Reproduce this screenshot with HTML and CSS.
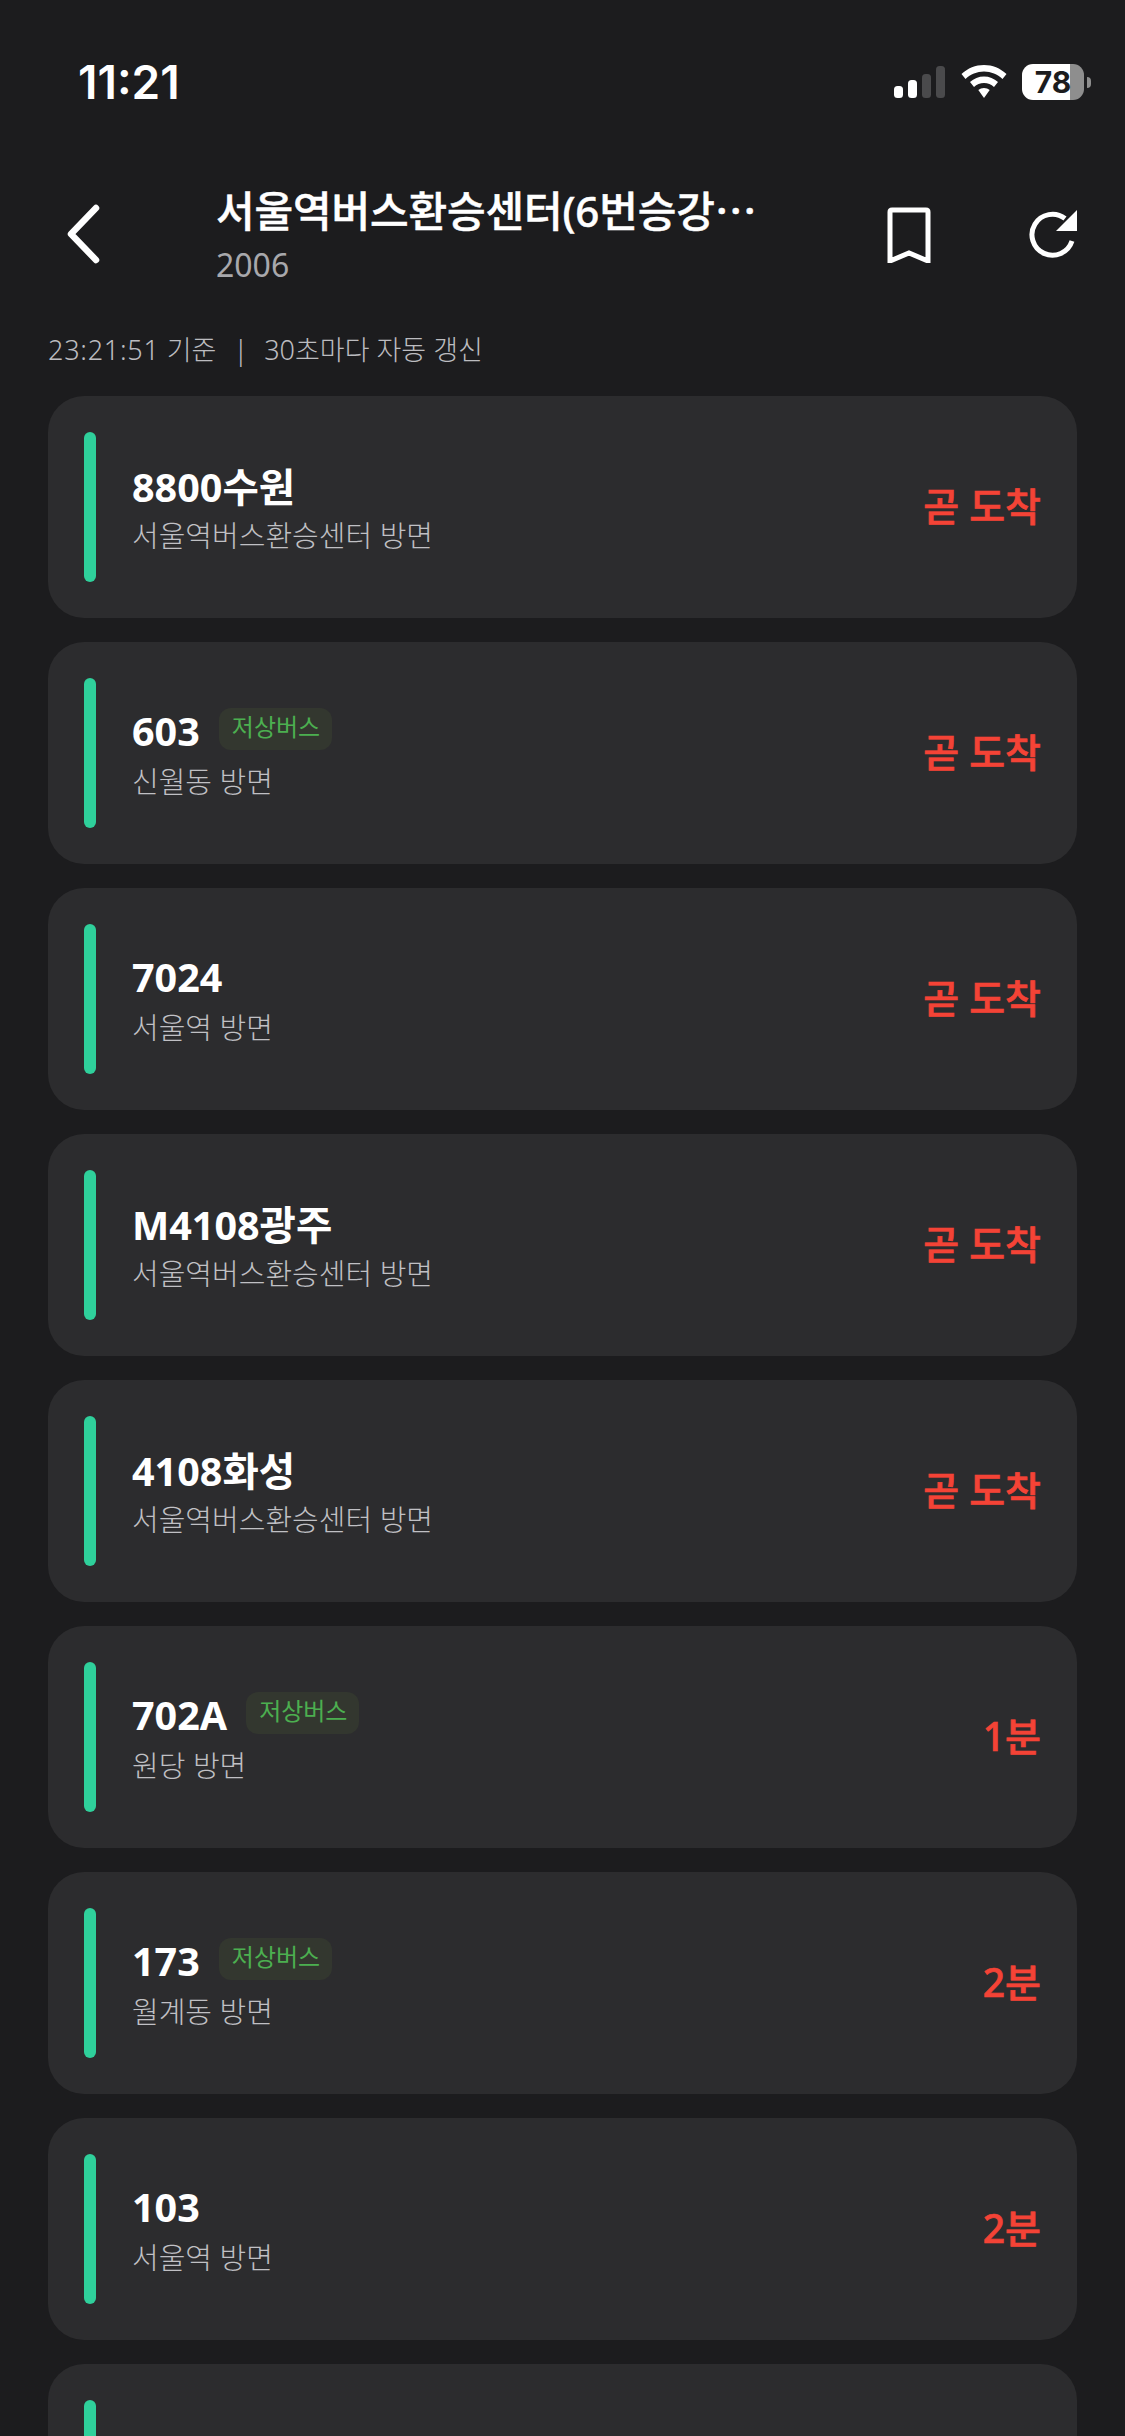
FILE: index.html
```html
<!DOCTYPE html>
<html lang="ko">

<head>
  <meta charset="UTF-8" />
  <title>서울역버스환승센터 도착 정보</title>
  <meta name="viewport" content="width=device-width, initial-scale=1.0" />
  <link rel="stylesheet" href="styles.css">
</head>

<body>
  <div class="status-bar">
    <span class="clock">11:21</span>
    <div class="status-icons">
      <svg class="signal" width="52" height="32" viewBox="0 0 52 32">
        <rect x="0" y="20" width="9" height="12" rx="3.5" fill="#fff" />
        <rect x="14" y="14" width="9" height="18" rx="3.5" fill="#fff" />
        <rect x="28" y="8" width="9" height="24" rx="3.5" fill="#4a4a4c" />
        <rect x="42" y="0" width="9" height="32" rx="3.5" fill="#4a4a4c" />
      </svg>
      <svg class="wifi" width="46" height="34" viewBox="0 0 46 34">
        <path d="M23 0C14.500 0 6.800 3.200 0.500 9L4.500 14C9.500 9.300 16 6.500 23 6.500S36.500 9.300 41.500 14L45.500 9C39.200 3.200 31.500 0 23 0Z" fill="#fff" />
        <path d="M23 11.500C17.700 11.500 12.900 13.500 9 17L13 22C15.700 19.600 19.200 18 23 18S30.300 19.600 33 22L37 17C33.100 13.500 28.300 11.500 23 11.500Z" fill="#fff" />
        <path d="M23 23C20.800 23 18.900 23.700 17.300 25L23 33L28.700 25C27.100 23.700 25.200 23 23 23Z" fill="#fff" />
      </svg>
      <div class="battery">
        <div class="battery-body">
          <span class="battery-level">78</span>
        </div>
        <div class="battery-nub"></div>
      </div>
    </div>
  </div>

  <header class="top-bar">
    <button class="back-btn" aria-label="뒤로">
      <svg width="36" height="60" viewBox="0 0 36 60">
        <path d="M31 4L6 30L31 56" fill="none" stroke="#fff" stroke-width="6.500" stroke-linecap="round" stroke-linejoin="round" />
      </svg>
    </button>
    <div class="stop-info">
      <div class="stop-name">서울역버스환승센터(6번승강⋯</div>
      <div class="stop-id">2006</div>
    </div>
    <div class="top-actions">
      <svg width="44" height="56" viewBox="0 0 44 56">
        <path d="M3 54V5Q3 3 5 3H39Q41 3 41 5V54L22 46Z" fill="none" stroke="#fff" stroke-width="5" />
      </svg>
      <svg width="50" height="50" viewBox="0 0 50 50">
        <path d="M43 31A20.500 20.500 0 1 1 36 8.500" fill="none" stroke="#fff" stroke-width="5" />
        <path d="M48 0V21H27Z" fill="#fff" />
      </svg>
    </div>
  </header>

  <div class="update-info"><span class="update-time">23:21:51</span> 기준 &nbsp;<span class="update-sep">|</span>&nbsp; 30초마다 자동 갱신</div>

  <main class="bus-list">
    <div class="bus-card">
      <div class="bus-bar"></div>
      <div class="bus-text">
        <div class="bus-title"><span class="bus-no">8800수원</span></div>
        <div class="bus-dir">서울역버스환승센터 방면</div>
      </div>
      <div class="bus-eta">곧 도착</div>
    </div>

    <div class="bus-card">
      <div class="bus-bar"></div>
      <div class="bus-text">
        <div class="bus-title"><span class="bus-no">603</span><span class="badge">저상버스</span></div>
        <div class="bus-dir">신월동 방면</div>
      </div>
      <div class="bus-eta">곧 도착</div>
    </div>

    <div class="bus-card">
      <div class="bus-bar"></div>
      <div class="bus-text">
        <div class="bus-title"><span class="bus-no">7024</span></div>
        <div class="bus-dir">서울역 방면</div>
      </div>
      <div class="bus-eta">곧 도착</div>
    </div>

    <div class="bus-card">
      <div class="bus-bar"></div>
      <div class="bus-text">
        <div class="bus-title"><span class="bus-no">M4108광주</span></div>
        <div class="bus-dir">서울역버스환승센터 방면</div>
      </div>
      <div class="bus-eta">곧 도착</div>
    </div>

    <div class="bus-card">
      <div class="bus-bar"></div>
      <div class="bus-text">
        <div class="bus-title"><span class="bus-no">4108화성</span></div>
        <div class="bus-dir">서울역버스환승센터 방면</div>
      </div>
      <div class="bus-eta">곧 도착</div>
    </div>

    <div class="bus-card">
      <div class="bus-bar"></div>
      <div class="bus-text">
        <div class="bus-title"><span class="bus-no">702A</span><span class="badge">저상버스</span></div>
        <div class="bus-dir">원당 방면</div>
      </div>
      <div class="bus-eta">1분</div>
    </div>

    <div class="bus-card">
      <div class="bus-bar"></div>
      <div class="bus-text">
        <div class="bus-title"><span class="bus-no">173</span><span class="badge">저상버스</span></div>
        <div class="bus-dir">월계동 방면</div>
      </div>
      <div class="bus-eta">2분</div>
    </div>

    <div class="bus-card">
      <div class="bus-bar"></div>
      <div class="bus-text">
        <div class="bus-title"><span class="bus-no">103</span></div>
        <div class="bus-dir">서울역 방면</div>
      </div>
      <div class="bus-eta">2분</div>
    </div>

    <div class="bus-card">
      <div class="bus-bar"></div>
      <div class="bus-text">
        <div class="bus-title"><span class="bus-no">1650화성</span></div>
      </div>
    </div>
  </main>
</body>

</html>
```

FILE: styles.css
```css
* {
  margin: 0;
  padding: 0;
  box-sizing: border-box;
  font-family: "Noto Sans", "Noto Sans CJK KR", sans-serif;
}

html,
body {
  height: 2436px;
  overflow: hidden;
}

body {
  background: #1c1c1e;
  color: #fff;
}

.status-bar {
  height: 164px;
  padding: 58px 34px 0 78px;
  display: flex;
  justify-content: space-between;
  align-items: flex-start;
}

.clock {
  font-family: Inter, sans-serif;
  font-size: 46px;
  font-weight: 600;
  line-height: 48px;
}

.status-icons {
  display: flex;
  align-items: center;
  gap: 15px;
  padding-top: 6px;
}

.battery {
  display: flex;
  align-items: center;
  gap: 3px;
}

.battery-body {
  width: 62px;
  height: 36px;
  border-radius: 11px;
  background: linear-gradient(to right, #fff 48px, #8e8e8e 48px);
  display: flex;
  align-items: center;
  justify-content: center;
}

.battery-level {
  font-family: Inter, sans-serif;
  font-size: 30px;
  font-weight: 700;
  color: #1c1c1e;
}

.battery-nub {
  width: 4px;
  height: 11px;
  border-radius: 0 5px 5px 0;
  background: #8e8e8e;
}

.top-bar {
  height: 136px;
  padding-right: 46px;
  display: flex;
  align-items: flex-start;
}

.back-btn {
  width: 216px;
  height: 136px;
  padding: 40px 0 0 65px;
  background: none;
  border: none;
  display: flex;
  align-items: flex-start;
}

.stop-info {
  width: 544px;
  padding-top: 18px;
}

.stop-name {
  font-size: 42px;
  font-weight: 500;
  line-height: 58px;
  white-space: nowrap;
  letter-spacing: -0.15px;
  -webkit-text-stroke: 0.5px #fff;
}

.stop-id {
  font-size: 32px;
  line-height: 50px;
  color: #a8a8ac;
}

.top-actions {
  flex: 1;
  padding: 43px 0 0 127px;
  display: flex;
  align-items: center;
  justify-content: space-between;
}

.update-info {
  height: 96px;
  padding: 30px 0 0 48px;
  font-size: 27px;
  font-weight: 300;
  line-height: 40px;
  color: #bcbcc0;
}

.update-time {
  letter-spacing: 0.75px;
}

.update-sep {
  padding: 0 2px 0 3px;
}

.bus-list {
  padding: 0 48px;
  display: flex;
  flex-direction: column;
  gap: 24px;
}

.bus-card {
  height: 222px;
  flex-shrink: 0;
  padding: 36px;
  background: #2c2c2e;
  border-radius: 36px;
  display: flex;
  align-items: center;
}

.bus-bar {
  width: 12px;
  height: 150px;
  border-radius: 6px;
  background: #2fd09b;
}

.bus-text {
  flex: 1;
  padding-left: 36px;
}

.bus-title {
  height: 56px;
  margin-top: -1px;
  margin-bottom: 2px;
  display: flex;
  align-items: center;
}

.bus-no {
  font-size: 39.5px;
  font-weight: 700;
}

.badge {
  margin-left: 19px;
  margin-top: -4px;
  padding: 0 12px 0 13px;
  height: 42px;
  line-height: 38px;
  border-radius: 12px;
  background: #33372f;
  color: #4caf50;
  font-size: 24px;
}

.bus-dir {
  font-size: 29px;
  font-weight: 300;
  line-height: 42px;
  color: #c0c0c4;
}

.bus-eta {
  margin-top: -6px;
  font-size: 39px;
  font-weight: 500;
  color: #f44336;
  -webkit-text-stroke: 0.7px #f44336;
}
```
